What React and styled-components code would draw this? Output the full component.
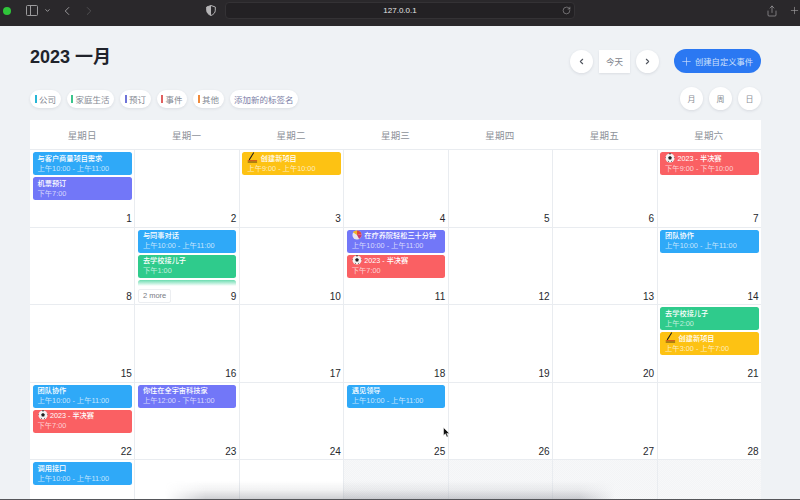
import React from 'react'
import styled, { createGlobalStyle } from 'styled-components'
import { ChevronLeft, ChevronRight, ChevronDown, Plus, RotateCw, Share } from 'lucide-react'

const FONT = `"Liberation Sans", "Noto Sans CJK SC", sans-serif`
const BLUE = '#2fa9f8'
const PURPLE = '#7277f8'
const GREEN = '#2fcb8c'
const RED = '#fa6063'
const YELLOW = '#fdc213'

const SoccerIcon = () => (
    <svg width="10" height="10" viewBox="0 0 12 12">
        <circle cx="6" cy="6" r="5.5" fill="#f4f4f4" />
        <path d="M6 3.6 8.2 5.2 7.4 7.8H4.6L3.8 5.2Z" fill="#1d1d1f" />
        <path d="M4.2 1 6 1.9 7.8 1 6 .4ZM1 6.6 1.4 4.4.6 5ZM11 6.6 10.6 4.4 11.4 5ZM3.6 10.6 5 10.9 3.4 9ZM8.4 10.6 7 10.9 8.6 9Z" fill="#1d1d1f" />
    </svg>
)

const PencilIcon = () => (
    <svg width="11" height="11" viewBox="0 0 12 12">
        <path d="M7.4.6 2.4 8.6" stroke="#1c1c1c" strokeWidth="1.1" fill="none" />
        <path d="M.8 9.6H11" stroke="#c8411e" strokeWidth="1.2" />
        <path d="M.8 11H11" stroke="#3a2a10" strokeWidth=".8" />
    </svg>
)

const BallIcon = () => (
    <svg width="10" height="10" viewBox="0 0 12 12">
        <circle cx="6" cy="6" r="5.5" fill="#e8e6ee" />
        <path d="M6 6 1 2.8A5.5 5.5 0 0 1 6 .5Z" fill="#f0b32a" />
        <path d="M6 6V.5A5.5 5.5 0 0 1 11.4 5Z" fill="#e0483e" />
        <path d="M6 6 11.4 5A5.5 5.5 0 0 1 8.6 10.8Z" fill="#c73a72" />
    </svg>
)

const ICONS = { soccer: SoccerIcon, pencil: PencilIcon, ball: BallIcon }

const E = (title, time, color, icon) => ({ title, time, color, icon })
const FINAL_TITLE = '2023 - 半决赛'
const BUILD_TITLE = '创建新项目'

const WEEKS = [
    [
        { day: 1, events: [E('与客户商量项目需求', '上午10:00 - 上午11:00', BLUE), E('机票预订', '下午7:00', PURPLE)] },
        { day: 2 },
        { day: 3, events: [E(BUILD_TITLE, '上午9:00 - 上午10:00', YELLOW, 'pencil')] },
        { day: 4 },
        { day: 5 },
        { day: 6 },
        { day: 7, events: [E(FINAL_TITLE, '下午9:00 - 下午10:00', RED, 'soccer')] },
    ],
    [
        { day: 8 },
        { day: 9, more: true, events: [E('与同事对话', '上午10:00 - 上午11:00', BLUE), E('去学校接儿子', '下午1:00', GREEN)] },
        { day: 10 },
        { day: 11, events: [E('在疗养院轻松三十分钟', '上午10:00 - 上午11:00', PURPLE, 'ball'), E(FINAL_TITLE, '下午7:00', RED, 'soccer')] },
        { day: 12 },
        { day: 13 },
        { day: 14, events: [E('团队协作', '上午10:00 - 上午11:00', BLUE)] },
    ],
    [
        { day: 15 },
        { day: 16 },
        { day: 17 },
        { day: 18 },
        { day: 19 },
        { day: 20 },
        { day: 21, events: [E('去学校接儿子', '上午2:00', GREEN), E(BUILD_TITLE, '上午3:00 - 上午7:00', YELLOW, 'pencil')] },
    ],
    [
        { day: 22, events: [E('团队协作', '上午10:00 - 上午11:00', BLUE), E(FINAL_TITLE, '下午7:00', RED, 'soccer')] },
        { day: 23, events: [E('你住在全宇宙科技家', '上午12:00 - 下午11:00', PURPLE)] },
        { day: 24 },
        { day: 25, events: [E('遇见领导', '上午10:00 - 上午11:00', BLUE)] },
        { day: 26 },
        { day: 27 },
        { day: 28 },
    ],
    [
        { events: [E('调用接口', '上午10:00 - 上午11:00', BLUE)] },
        {},
        {},
        { off: true },
        { off: true },
        { off: true },
        { off: true },
    ],
]

const DAYS = ['星期日', '星期一', '星期二', '星期三', '星期四', '星期五', '星期六']
const TAGS = [
    ['公司', '#27b6d6'],
    ['家庭生活', '#3cc48c'],
    ['预订', '#6f74d8'],
    ['事件', '#e0605f'],
    ['其他', '#ef8a3c'],
]

const GlobalStyle = createGlobalStyle`
    html, body {
        margin: 0;
        padding: 0;
        background: #eff2f5;
        font-family: ${FONT};
    }
`

const Page = styled.div`
    position: relative;
    width: 800px;
    height: 500px;
    overflow: hidden;
    background: #eff2f5;
`

const BrowserBar = styled.div`
    height: 26px;
    box-sizing: border-box;
    background: #2a282b;
    display: flex;
    align-items: center;
    padding: 0 0 5px 3px;
    color: #a7a6a8;
`

const TrafficDot = styled.span`
    width: 8px;
    height: 8px;
    border-radius: 50%;
    background: #2fc53a;
`

const SidebarGlyph = styled.span`
    width: 10px;
    height: 9px;
    margin-left: 15px;
    border: 1px solid #9b9a9c;
    border-radius: 1.5px;
    display: flex;
    &::before {
        content: '';
        width: 3px;
        border-right: 1px solid #9b9a9c;
    }
`

const NavGroup = styled.div`
    display: flex;
    align-items: center;
    gap: ${p => p.$gap || 0}px;
    margin-left: ${p => p.$left || 0}px;
`

const AddressBar = styled.div`
    width: 350px;
    height: 17px;
    margin-left: 9px;
    box-sizing: border-box;
    background: #232124;
    border: 1px solid #343235;
    border-radius: 4px;
    display: flex;
    align-items: center;
    justify-content: center;
    position: relative;
    color: #e4e3e5;
    font-size: 8px;
`

const Reload = styled.span`
    position: absolute;
    right: 3px;
    top: 3px;
    display: flex;
    color: #a7a6a8;
`

const Spacer = styled.div`
    flex: 1;
`

const Main = styled.main`
    padding: 23px 39px 0 30px;
`

const TopRow = styled.div`
    display: flex;
    align-items: center;
    height: 24px;
`

const Title = styled.h1`
    margin: 0;
    font-size: 18px;
    line-height: 18px;
    font-weight: 700;
    color: #20232b;
    position: relative;
    top: -4px;
`

const RoundButton = styled.button`
    width: 23px;
    height: 23px;
    padding: 0;
    border: none;
    border-radius: 50%;
    background: #fff;
    color: ${p => (p.$label ? '#8a8e96' : '#50555e')};
    font: 8px ${FONT};
    display: flex;
    align-items: center;
    justify-content: center;
    box-shadow: 0 1px 3px rgba(40, 50, 70, 0.12);
`

const TodayButton = styled.button`
    width: 31px;
    height: 23px;
    padding: 0;
    border: none;
    background: #fff;
    color: #7e838c;
    font: 8.5px ${FONT};
    box-shadow: 0 1px 2px rgba(40, 50, 70, 0.1);
`

const CreateButton = styled.button`
    width: 87px;
    height: 24px;
    margin-left: 15px;
    padding: 0 0 0 6px;
    border: none;
    border-radius: 12px;
    background: #2b78f2;
    color: #cfe0fb;
    font: 8.3px ${FONT};
    display: flex;
    align-items: center;
    gap: 2px;
`

const TagRow = styled.div`
    display: flex;
    align-items: center;
    height: 23px;
    margin-top: 14px;
`

const Chip = styled.span`
    height: 18px;
    padding: 0 4.5px;
    margin-right: 6px;
    border-radius: 9px;
    background: #fff;
    color: ${p => (p.$plain ? '#7d7fa8' : '#858a93')};
    font-size: 8.5px;
    display: flex;
    align-items: center;
    gap: 2.5px;
    box-shadow: 0 1px 3px rgba(40, 50, 70, 0.1);
`

const ChipMark = styled.i`
    width: 2px;
    height: 8px;
    background: ${p => p.$color};
`

const ViewGroup = styled.div`
    display: flex;
    gap: 6px;
`

const Calendar = styled.section`
    margin-top: 10px;
    background: #fff;
`

const HeadRow = styled.div`
    display: grid;
    grid-template-columns: repeat(7, 1fr);
    height: 29px;
    border-bottom: 1px solid #e9ecf0;
`

const HeadCell = styled.div`
    display: flex;
    align-items: center;
    justify-content: center;
    color: #8d9199;
    font-size: 9.5px;
    letter-spacing: 0.2px;
`

const WeekRow = styled.div`
    display: grid;
    grid-template-columns: repeat(7, 1fr);
    height: 77.5px;
    box-sizing: border-box;
    border-bottom: 1px solid #e9ecf0;
`

const DayCell = styled.div`
    min-width: 0;
    box-sizing: border-box;
    padding: 2px 2.5px 1px 2.5px;
    display: flex;
    flex-direction: column;
    gap: 2px;
    border-left: ${p => (p.$first ? 'none' : '1px solid #e9ecf0')};
    background: ${p =>
        p.$off
            ? 'repeating-conic-gradient(#f3f4f6 0 25%, #f7f8f9 0 50%) 0 0 / 2px 2px'
            : '#fff'};
`

const EventCard = styled.div`
    height: 23px;
    flex: none;
    box-sizing: border-box;
    padding: 0.5px 5px 0;
    border-radius: 2.5px;
    background: ${p => p.$color};
    overflow: hidden;
`

const EventTitle = styled.div`
    display: flex;
    align-items: center;
    gap: 2.5px;
    height: 10px;
    color: #fff;
    font-size: 7.2px;
    font-weight: 500;
    white-space: nowrap;
`

const EventTime = styled.div`
    height: 10px;
    margin-top: 1px;
    color: rgba(255, 255, 255, 0.72);
    font-size: 7.3px;
    line-height: 10px;
    white-space: nowrap;
`

const FadedEvent = styled.div`
    height: 6px;
    flex: none;
    border-radius: 2.5px 2.5px 0 0;
    background: linear-gradient(#6bdcb0, #ffffff);
`

const DayFoot = styled.div`
    margin-top: auto;
    height: 14px;
    display: flex;
    align-items: center;
    justify-content: space-between;
`

const MoreButton = styled.span`
    height: 12px;
    padding: 0 4px;
    border: 1px solid #eceef1;
    border-radius: 2px;
    color: #777b83;
    font-size: 7.5px;
    line-height: 12px;
`

const DayNumber = styled.span`
    margin-left: auto;
    color: #26282d;
    font-size: 10px;
`

const Cursor = styled.svg`
    position: absolute;
    left: 443px;
    top: 427px;
`

const BottomShade = styled.div`
    position: absolute;
    left: 165px;
    bottom: 1px;
    width: 450px;
    height: 18px;
    background: linear-gradient(rgba(140, 142, 150, 0), rgba(140, 142, 150, 0.12) 50%, rgba(140, 142, 150, 0.42));
    mask-image: linear-gradient(to right, transparent, #000 9%, #000 92%, transparent);
`

const BottomLine = styled.div`
    position: absolute;
    left: 0;
    right: 0;
    bottom: 0;
    height: 1px;
    background: #55565a;
`

const Event = ({ title, time, color, icon }) => {
    const Icon = ICONS[icon]
    return (
        <EventCard $color={color}>
            <EventTitle>
                {Icon && <Icon />}
                {title}
            </EventTitle>
            <EventTime>{time}</EventTime>
        </EventCard>
    )
}

const App = () => (
    <Page>
        <GlobalStyle />
        <BrowserBar>
            <TrafficDot />
            <SidebarGlyph />
            <NavGroup $left={6}>
                <ChevronDown size={7} strokeWidth={3} />
            </NavGroup>
            <NavGroup $left={9} $gap={8}>
                <ChevronLeft size={14} strokeWidth={1.5} />
                <ChevronRight size={14} strokeWidth={1.5} color="#555356" />
            </NavGroup>
            <NavGroup $left={110}>
                <svg width="10" height="11" viewBox="0 0 10 11">
                    <path d="M5 .5 9.3 2v3.2c0 2.6-1.8 4.3-4.3 5.3C2.5 9.5.7 7.8.7 5.2V2Z" fill="none" stroke="#b5b4b6" />
                    <path d="M5 .5V10.5C2.5 9.5.7 7.8.7 5.2V2Z" fill="#b5b4b6" />
                </svg>
            </NavGroup>
            <AddressBar>
                127.0.0.1
                <Reload><RotateCw size={9} strokeWidth={1.5} /></Reload>
            </AddressBar>
            <Spacer />
            <Share size={12} strokeWidth={1.3} />
            <NavGroup $left={11}>
                <Plus size={11} strokeWidth={1.3} />
            </NavGroup>
        </BrowserBar>
        <Main>
            <TopRow>
                <Title>2023 一月</Title>
                <Spacer />
                <NavGroup $gap={6}>
                    <RoundButton><ChevronLeft size={9} strokeWidth={3} /></RoundButton>
                    <TodayButton>今天</TodayButton>
                    <RoundButton><ChevronRight size={9} strokeWidth={3} /></RoundButton>
                </NavGroup>
                <CreateButton>
                    <Plus size={13} strokeWidth={1.2} />
                    创建自定义事件
                </CreateButton>
            </TopRow>
            <TagRow>
                {TAGS.map(([name, color]) => (
                    <Chip key={name}>
                        <ChipMark $color={color} />
                        {name}
                    </Chip>
                ))}
                <Chip $plain>添加新的标签名</Chip>
                <Spacer />
                <ViewGroup>
                    <RoundButton $label>月</RoundButton>
                    <RoundButton $label>周</RoundButton>
                    <RoundButton $label>日</RoundButton>
                </ViewGroup>
            </TagRow>
            <Calendar>
                <HeadRow>
                    {DAYS.map(d => <HeadCell key={d}>{d}</HeadCell>)}
                </HeadRow>
                {WEEKS.map((week, w) => (
                    <WeekRow key={w}>
                        {week.map((cell, c) => (
                            <DayCell key={c} $first={c === 0} $off={cell.off}>
                                {(cell.events || []).map((ev, i) => <Event key={i} {...ev} />)}
                                {cell.more && <FadedEvent />}
                                {cell.day && (
                                    <DayFoot>
                                        {cell.more && <MoreButton>2 more</MoreButton>}
                                        <DayNumber>{cell.day}</DayNumber>
                                    </DayFoot>
                                )}
                            </DayCell>
                        ))}
                    </WeekRow>
                ))}
            </Calendar>
        </Main>
        <Cursor width="7" height="11" viewBox="0 0 7 11">
            <path d="M.5.5V8.5L2.4 6.8 3.8 10 5.2 9.4 3.8 6.4H6.4Z" fill="#111" stroke="#fff" strokeWidth=".5" />
        </Cursor>
        <BottomShade />
        <BottomLine />
    </Page>
)

export default App
